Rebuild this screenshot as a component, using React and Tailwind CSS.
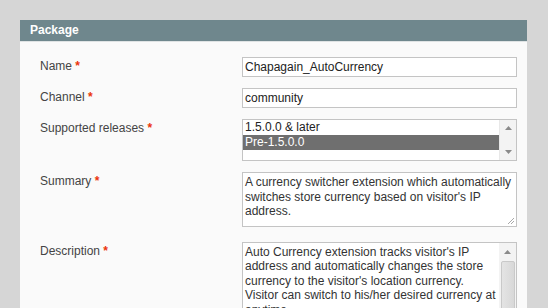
import React from "react";

const Req = () => <span className="text-[#eb340a] font-bold"> *</span>;

function Label({ children }) {
  return (
    <div className="w-[202px] shrink-0 pt-[2px] text-[12px] leading-[15px] text-[#444]">
      {children}
      <Req />
    </div>
  );
}

function UpArrow() {
  return (
    <svg width="7" height="4" viewBox="0 0 7 4" className="block">
      <path d="M0 4 L3.5 0 L7 4 Z" fill="#8a8a8a" />
    </svg>
  );
}
function DownArrow() {
  return (
    <svg width="7" height="4" viewBox="0 0 7 4" className="block">
      <path d="M0 0 L3.5 4 L7 0 Z" fill="#8a8a8a" />
    </svg>
  );
}

export default function App() {
  return (
    <div className="w-[548px] h-[308px] overflow-hidden bg-[#d6d6d6] pt-[20px] pl-[20px] [font-family:'Liberation_Sans',Arial,sans-serif]">
      <div className="w-[507px] h-[288px] flex flex-col">
        <div className="h-[22px] shrink-0 bg-[#6f878d] pl-[10px] text-[12px] leading-[20px] font-bold text-white border-b border-[#dfe3e4]">
          Package
        </div>
        <div className="flex-1 bg-[#fafafa] pt-[15px] pl-[20px]">
          {/* Name */}
          <div className="flex">
            <Label>Name</Label>
            <div className="w-[275px] h-[20px] border border-[#c4c4c4] bg-white pl-[2px] text-[12px] leading-[18px] text-[#222]">
              Chapagain_AutoCurrency
            </div>
          </div>
          {/* Channel */}
          <div className="flex mt-[11px]">
            <Label>Channel</Label>
            <div className="w-[275px] h-[20px] border border-[#c4c4c4] bg-white pl-[2px] text-[12px] leading-[18px] text-[#222]">
              community
            </div>
          </div>
          {/* Supported releases */}
          <div className="flex mt-[11px]">
            <Label>Supported releases</Label>
            <div className="w-[275px] h-[42px] border border-[#c4c4c4] bg-white flex">
              <div className="flex-1 text-[12px] leading-[15px] text-[#222]">
                <div className="pl-[2px]">1.5.0.0 &amp; later</div>
                <div className="pl-[2px] bg-[#6f6f6f] text-white">Pre-1.5.0.0</div>
              </div>
              <div className="w-[17px] bg-[#f3f3f3] border-l border-[#e8e8e8] flex flex-col items-center justify-between pt-[6px] pb-[6px]">
                <UpArrow />
                <DownArrow />
              </div>
            </div>
          </div>
          {/* Summary */}
          <div className="flex mt-[11px]">
            <Label>Summary</Label>
            <div className="relative w-[275px] h-[55px] border border-[#c4c4c4] bg-white pl-[2px] pt-[2px] text-[12px] leading-[14.5px] text-[#333]">
              A currency switcher extension which automatically
              <br />
              switches store currency based on visitor's IP
              <br />
              address.
              <svg width="8" height="8" viewBox="0 0 8 8" className="absolute right-[1px] bottom-[1px]">
                <path d="M7 1 L1 7 M7 4 L4 7" stroke="#a8a8a8" strokeWidth="1" />
              </svg>
            </div>
          </div>
          {/* Description */}
          <div className="flex mt-[15px]">
            <Label>Description</Label>
            <div className="w-[275px] h-[90px] border border-[#c4c4c4] bg-white flex">
              <div className="flex-1 pl-[2px] pt-[2px] text-[12px] leading-[14.4px] text-[#333]">
                Auto Currency extension tracks visitor's IP
                <br />
                address and automatically changes the store
                <br />
                currency to the visitor's location currency.
                <br />
                Visitor can switch to his/her desired currency at
                <br />
                anytime.
              </div>
              <div className="w-[17px] bg-[#f3f3f3] flex flex-col items-center">
                <div className="h-[18px] flex items-center justify-center">
                  <UpArrow />
                </div>
                <div className="w-[14px] flex-1 mb-[2px] rounded-[2px] border border-[#c9c9c9] bg-gradient-to-r from-[#e4e4e4] to-[#d8d8d8]" />
              </div>
            </div>
          </div>
        </div>
      </div>
    </div>
  );
}
